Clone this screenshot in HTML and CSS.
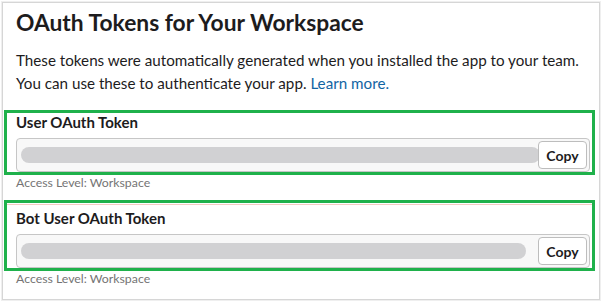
FILE: index.html
```html
<!DOCTYPE html>
<html lang="en">
<head>
    <meta charset="UTF-8">
    <meta name="viewport" content="width=device-width, initial-scale=1.0">
    <title>OAuth Tokens</title>
    <link rel="stylesheet" href="styles.css">
</head>
<body>
    <div class="panel">
        <h1>OAuth Tokens for Your Workspace</h1>
        <p class="intro">
            These tokens were automatically generated when you installed the app to your team.<br>
            You can use these to authenticate your app. <a href="#">Learn more.</a>
        </p>

        <div class="token">
            <label>User OAuth Token</label>
            <div class="token-field">
                <span class="token-value token-value-long"></span>
                <button type="button">Copy</button>
            </div>
        </div>
        <div class="level">Access Level: Workspace</div>

        <div class="token token-bot">
            <label>Bot User OAuth Token</label>
            <div class="token-field">
                <span class="token-value"></span>
                <button type="button">Copy</button>
            </div>
        </div>
        <div class="level">Access Level: Workspace</div>
    </div>
</body>
</html>
```

FILE: styles.css
```css
body {
    margin: 0;
    background-color: #fff;
    font-family: Lato, "Open Sans", sans-serif;
    color: #1d1c1d;
}
.panel {
    box-sizing: border-box;
    width: 598px;
    height: 298px;
    margin: 2px;
    padding: 6px 13px 0 13px;
    border: 1px solid #d6d6d6;
    box-shadow: 0 0 0 1px #efefef;
    overflow: hidden;
}
h1 {
    margin: 0;
    font-size: 22.8px;
    line-height: 26px;
    font-weight: 700;
}
.intro {
    margin: 14px 0 0 0;
    font-size: 15.2px;
    line-height: 23px;
    white-space: nowrap;
}
.intro a {
    color: #1264a3;
    text-decoration: none;
}
.token {
    margin: 15px -9px 0 -12px;
    padding: 0 2px 0 9px;
    border: 3px solid #1fb14b;
    border-bottom-width: 0;
    position: relative;
}
.token::after {
    content: "";
    position: absolute;
    left: -3px;
    right: -3px;
    bottom: -3px;
    height: 3px;
    background: #1fb14b;
}
.token-bot {
    margin-top: 9px;
    padding-top: 6px;
    box-shadow: inset 0 1px 0 #fff, inset 0 2px 0 #f3cbc2;
}
.token label {
    display: block;
    font-size: 15px;
    line-height: 18px;
    font-weight: 700;
}
.token-field {
    display: flex;
    align-items: center;
    box-sizing: border-box;
    height: 34px;
    margin-top: 7px;
    padding: 0 2px 0 4px;
    background: #f8f8f8;
    border: 1px solid #c6c6c6;
    border-radius: 4px;
}
.token-value {
    flex: 1;
    height: 16px;
    margin-right: -2px;
    border-radius: 8px;
    background: #d1d1d3;
}
.token-bot .token-value {
    margin-right: 12px;
}
.token-field button {
    position: relative;
    width: 49px;
    height: 28px;
    padding: 0;
    font-family: Lato, "Open Sans", sans-serif;
    font-size: 14px;
    font-weight: 700;
    color: #1d1c1d;
    background: #fff;
    border: 1px solid #bdbdbd;
    border-radius: 4px;
}
.level {
    padding-top: 3px;
    font-size: 12.3px;
    line-height: 16px;
    color: #747474;
}
```
